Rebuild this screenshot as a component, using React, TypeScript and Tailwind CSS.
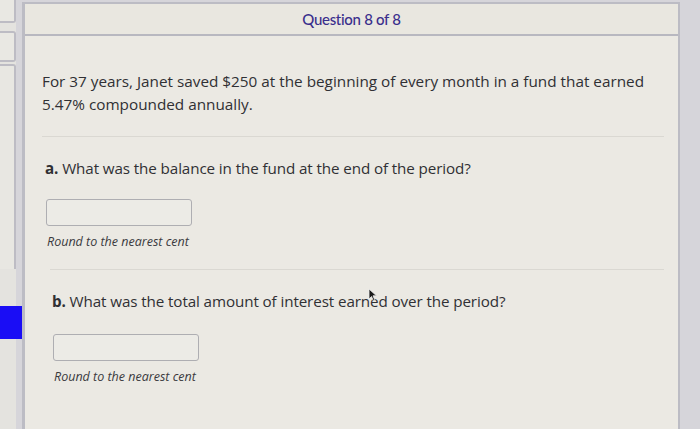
const Cursor = () => (
  <svg className="absolute left-[368px] top-[288px]" width="9" height="14" viewBox="0 0 9 14">
    <path d="M1 1 L1 11 L3.5 8.5 L5.5 13 L7 12.3 L5 7.8 L8.5 7.8 Z" fill="#1a1a1a" stroke="#eeeeee" strokeWidth="0.8" />
  </svg>
);

interface PartProps {
  label: string;
  question: string;
  indent: string;
  gap: string;
}

const Part = ({ label, question, indent, gap }: PartProps) => (
  <div className={`flex flex-col ${indent}`}>
    <p className="text-[15.2px] leading-[22px] tracking-[-0.1px] text-[#303034]">
      <span className="font-bold">{label}</span> {question}
    </p>
    <div className={`${gap} ml-[1px] h-[27px] w-[146px] rounded-[3px] border border-[#aeaeb2] bg-[#ecebe6]`} />
    <p className="mt-[8px] ml-[2px] text-[12.5px] italic leading-[16px] text-[#3a3a3e]">Round to the nearest cent</p>
  </div>
);

export default function App() {
  return (
    <div className="relative flex h-[429px] w-[700px] overflow-hidden bg-[#d6d5da] font-['Open_Sans',sans-serif]">
      {/* left nav strip */}
      <div className="flex w-[16px] flex-col bg-[#e4e3df]">
        <div className="h-[23px] rounded-br-[3px] border-r-2 border-b-2 border-[#bdbcc4] bg-[#e9e8e3]" />
        <div className="mt-[8px] h-[31px] rounded-r-[3px] border-y-2 border-r-2 border-[#bdbcc4] bg-[#e9e8e3]" />
        <div className="mt-[2px] h-[205px] rounded-tr-[3px] border-t-2 border-r-2 border-[#bdbcc4] bg-[#e8e7e2]" />
        <div className="mt-[37px] h-[33px] w-[25px] bg-[#1a0df5]" />
      </div>

      {/* main panel */}
      <div className="ml-[6px] mt-[2px] flex w-[658px] flex-col border-l-[3px] border-r-2 border-t-2 border-[#bcbcc4] bg-[#ebe9e3]">
        <div className="flex h-[32px] items-center justify-center border-b-2 border-[#b8b8c0] bg-[#e9e7e0]">
          <span className="font-['Lato',sans-serif] text-[15px] font-medium tracking-[-0.3px] text-[#3a2f8c]">Question 8 of 8</span>
        </div>

        <div className="flex flex-col pl-[17px] pr-[14px]">
          <p className="mt-[34px] text-[15.3px] leading-[23px] text-[#303034]">
            For 37 years, Janet saved $250 at the beginning of every month in a fund that earned 5.47% compounded annually.
          </p>
          <div className="mt-[20px] h-px bg-[#dad8d2]" />
          <div className="mt-[20px]">
            <Part label="a." question="What was the balance in the fund at the end of the period?" indent="ml-[3px]" gap="mt-[20px]" />
          </div>
          <div className="mt-[19px] ml-[8px] h-px bg-[#dad8d2]" />
          <div className="mt-[20px]">
            <Part label="b." question="What was the total amount of interest earned over the period?" indent="ml-[10px]" gap="mt-[22px]" />
          </div>
        </div>
      </div>

      <Cursor />
    </div>
  );
}
